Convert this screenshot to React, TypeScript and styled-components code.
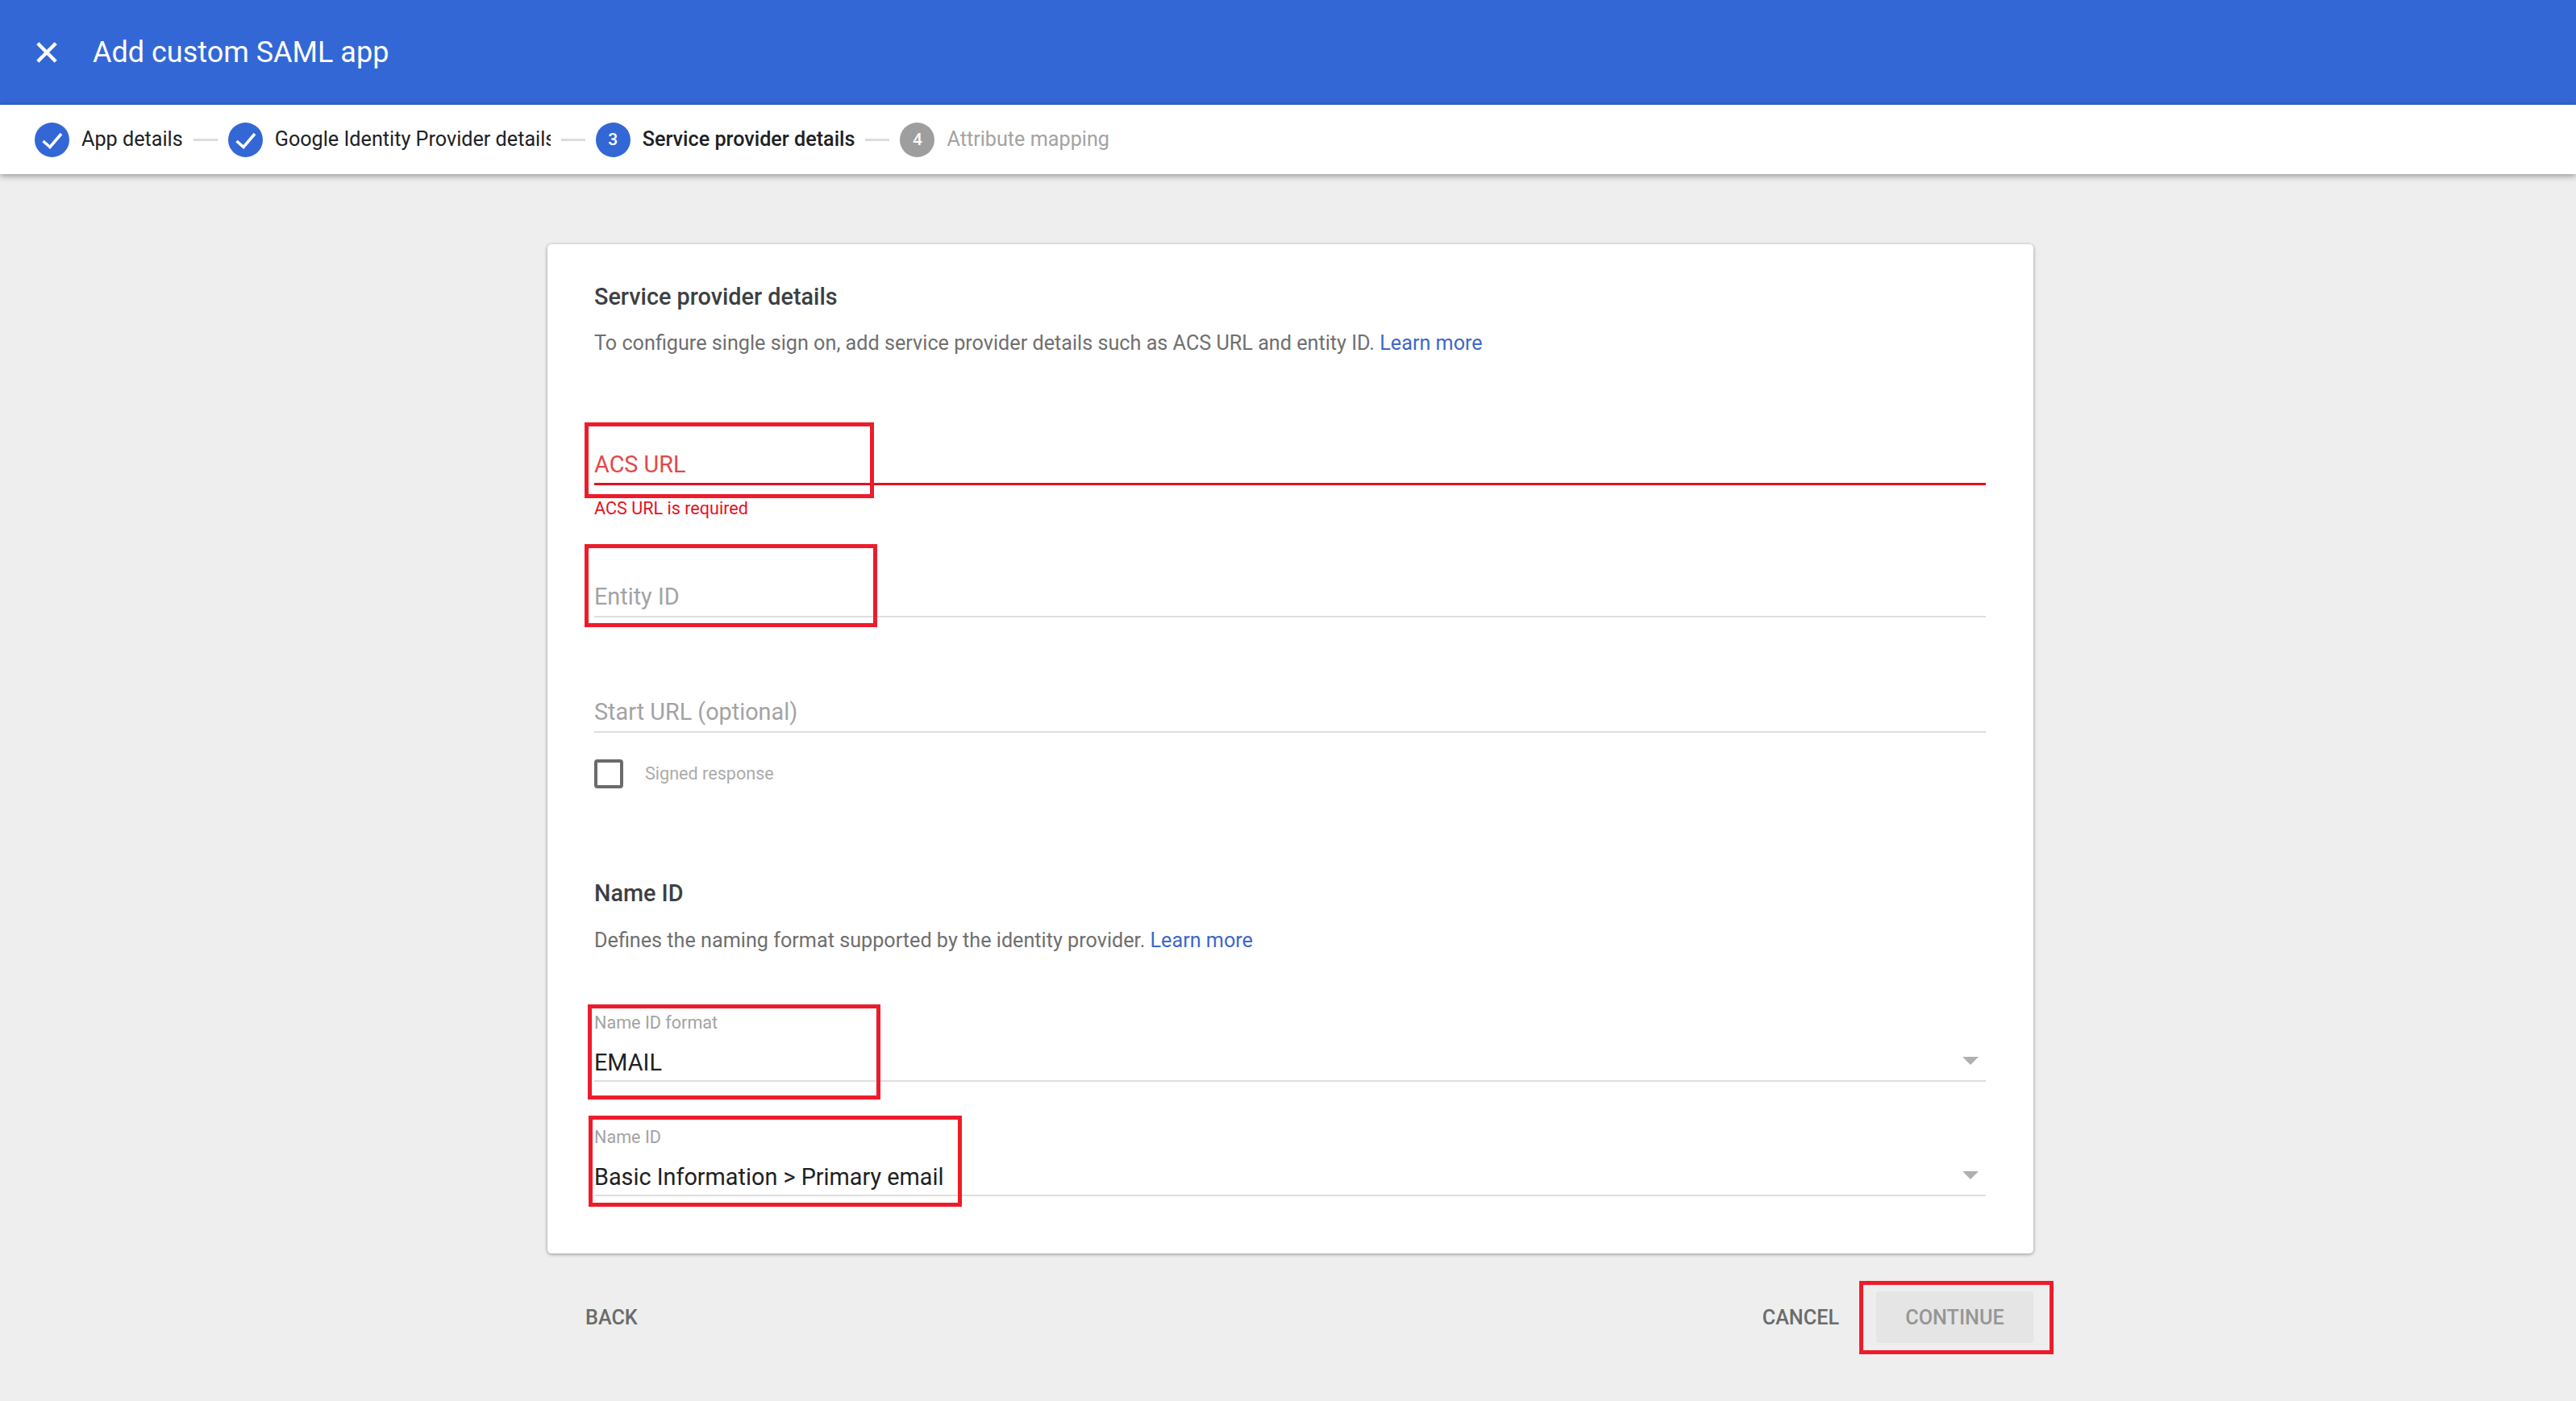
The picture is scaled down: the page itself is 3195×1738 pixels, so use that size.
import styled, { createGlobalStyle } from "styled-components";

const GlobalStyle = createGlobalStyle`
  html, body {
    margin: 0;
    padding: 0;
    background: #eeeeee;
    font-family: Roboto, "Liberation Sans", sans-serif;
  }
`;

const Page = styled.div`
  min-height: 1738px;
  background: #eeeeee;
  overflow: hidden;
`;

const Header = styled.header`
  height: 130px;
  background: #3367d6;
  display: flex;
  align-items: center;
  padding-left: 45px;
  color: #fff;
`;

const CloseIcon = styled.svg`
  width: 26px;
  height: 26px;
  margin-right: 44px;
  flex: none;
`;

const HeaderTitle = styled.h1`
  margin: 0;
  font-size: 36px;
  line-height: 48px;
  font-weight: 400;
`;

const Stepper = styled.nav`
  position: relative;
  height: 86px;
  background: #fff;
  display: flex;
  align-items: center;
  padding-left: 43px;
  box-shadow: 0 2px 8px rgba(0, 0, 0, 0.4);
`;

const Step = styled.div`
  display: flex;
  align-items: center;
`;

const StepCircle = styled.span<{ $disabled?: boolean }>`
  width: 43px;
  height: 43px;
  border-radius: 50%;
  flex: none;
  margin-right: 15px;
  display: flex;
  align-items: center;
  justify-content: center;
  background: ${(p) => (p.$disabled ? "#9e9e9e" : "#3367d6")};
  color: #fff;
  font-size: 21px;
  font-weight: 500;
`;

const StepLabel = styled.span<{ $active?: boolean; $disabled?: boolean; $maxWidth?: number }>`
  font-size: 25.2px;
  line-height: 36px;
  white-space: nowrap;
  overflow: hidden;
  font-weight: ${(p) => (p.$active ? 500 : 400)};
  color: ${(p) => (p.$disabled ? "#a3a3a3" : "#202124")};
  max-width: ${(p) => (p.$maxWidth ? `${p.$maxWidth}px` : "none")};
`;

const Connector = styled.span`
  width: 30px;
  height: 3px;
  background: #dcdcdc;
  margin: 0 13px;
  flex: none;
`;

const Main = styled.main`
  width: 1843px;
  margin: 87px 0 0 679px;
`;

const Card = styled.section`
  height: 1252px;
  box-sizing: border-box;
  padding: 45px 59px 0 58px;
  background: #fff;
  border-radius: 5px;
  box-shadow: 0 1px 4px rgba(0, 0, 0, 0.4);
`;

const SectionTitle = styled.h2<{ $gap?: number }>`
  margin: ${(p) => p.$gap ?? 0}px 0 0;
  font-size: 28.8px;
  line-height: 40px;
  font-weight: 500;
  color: #3c4043;
`;

const Description = styled.p<{ $gap: number }>`
  margin: ${(p) => p.$gap}px 0 0;
  font-size: 25.2px;
  line-height: 36px;
  color: #6f6f6f;
`;

const Link = styled.a`
  color: #3f67c9;
  text-decoration: none;
`;

const TextField = styled.div<{ $gap: number; $error?: boolean }>`
  position: relative;
  margin-top: ${(p) => p.$gap}px;
  padding-bottom: ${(p) => (p.$error ? 5 : 6)}px;
  font-size: 28.8px;
  line-height: 36px;
  color: ${(p) => (p.$error ? "#e0494a" : "#a3a3a3")};
  border-bottom: ${(p) => (p.$error ? "3px solid #e4111f" : "2px solid #dedede")};
`;

const ErrorText = styled.div`
  margin-top: 15px;
  font-size: 21.6px;
  line-height: 28px;
  color: #e4111f;
`;

const CheckRow = styled.label`
  display: flex;
  align-items: center;
  margin-top: 33px;
  height: 36px;
  font-size: 21.6px;
  line-height: 34px;
  color: #ababab;
`;

const CheckBox = styled.span`
  width: 36px;
  height: 36px;
  box-sizing: border-box;
  border: 4px solid #6b6b6b;
  border-radius: 4px;
  margin-right: 27px;
  flex: none;
`;

const SelectField = styled.div<{ $gap: number }>`
  position: relative;
  margin-top: ${(p) => p.$gap}px;
  padding-bottom: 4px;
  border-bottom: 2px solid #dedede;
`;

const SelectLabel = styled.div`
  font-size: 21.6px;
  line-height: 28px;
  color: #a3a3a3;
`;

const SelectValue = styled.div`
  margin-top: 18px;
  font-size: 28.8px;
  line-height: 35px;
  color: #202124;
`;

const Caret = styled.span`
  position: absolute;
  right: 9px;
  top: 56px;
  width: 0;
  height: 0;
  border-left: 10px solid transparent;
  border-right: 10px solid transparent;
  border-top: 10px solid #b0b0b0;
`;

const Footer = styled.footer`
  margin-top: 47px;
  height: 64px;
  display: flex;
  align-items: center;
  justify-content: space-between;
`;

const Actions = styled.div`
  display: flex;
  align-items: center;
  gap: 46px;
`;

const TextButton = styled.button<{ $inset?: number }>`
  padding: 2px 0 0;
  margin-left: ${(p) => p.$inset ?? 0}px;
  border: 0;
  background: none;
  font: 500 25.2px/36px Roboto, "Liberation Sans", sans-serif;
  color: #6b6b6b;
`;

const ContinueWrap = styled.div`
  position: relative;
`;

const ContinueButton = styled.button`
  display: block;
  width: 195px;
  height: 64px;
  padding: 2px 0 0;
  border: 0;
  border-radius: 4px;
  background: #e5e5e5;
  font: 500 25.2px/36px Roboto, "Liberation Sans", sans-serif;
  color: #969696;
`;

// red rectangles someone drew on the screenshot, they sit over the fields
const Callout = styled.span<{ $left: number; $top: number; $width: number; $height: number }>`
  position: absolute;
  left: ${(p) => p.$left}px;
  top: ${(p) => p.$top}px;
  width: ${(p) => p.$width}px;
  height: ${(p) => p.$height}px;
  box-sizing: border-box;
  border: 5px solid #ee1b2b;
  pointer-events: none;
`;

const Check = () => (
  <svg width="43" height="43" viewBox="0 0 43 43" fill="none">
    <path d="M10.5 23l8.5 7.5L33 14" stroke="#fff" strokeWidth="3.6" />
  </svg>
);

export default function App() {
  return (
    <Page>
      <GlobalStyle />
      <Header>
        <CloseIcon viewBox="0 0 26 26" fill="none">
          <path d="M1.8 1.8l22.4 22.4M24.2 1.8L1.8 24.2" stroke="#fff" strokeWidth="4.4" />
        </CloseIcon>
        <HeaderTitle>Add custom SAML app</HeaderTitle>
      </Header>

      <Stepper>
        <Step>
          <StepCircle>
            <Check />
          </StepCircle>
          <StepLabel>App details</StepLabel>
        </Step>
        <Connector />
        <Step>
          <StepCircle>
            <Check />
          </StepCircle>
          <StepLabel $maxWidth={342}>Google Identity Provider details</StepLabel>
        </Step>
        <Connector />
        <Step>
          <StepCircle>3</StepCircle>
          <StepLabel $active>Service provider details</StepLabel>
        </Step>
        <Connector />
        <Step>
          <StepCircle $disabled>4</StepCircle>
          <StepLabel $disabled>Attribute mapping</StepLabel>
        </Step>
      </Stepper>

      <Main>
        <Card>
          <SectionTitle>Service provider details</SectionTitle>
          <Description $gap={20}>
            To configure single sign on, add service provider details such as ACS URL and entity ID.{" "}
            <Link>Learn more</Link>
          </Description>

          <TextField $gap={114} $error>
            ACS URL
            <Callout $left={-12} $top={-34} $width={359} $height={94} />
          </TextField>
          <ErrorText>ACS URL is required</ErrorText>

          <TextField $gap={77}>
            Entity ID
            <Callout $left={-12} $top={-47} $width={363} $height={103} />
          </TextField>
          <TextField $gap={99}>Start URL (optional)</TextField>

          <CheckRow>
            <CheckBox />
            Signed response
          </CheckRow>

          <SectionTitle $gap={110}>Name ID</SectionTitle>
          <Description $gap={21}>
            Defines the naming format supported by the identity provider. <Link>Learn more</Link>
          </Description>

          <SelectField $gap={70}>
            <SelectLabel>Name ID format</SelectLabel>
            <SelectValue>EMAIL</SelectValue>
            <Caret />
            <Callout $left={-8} $top={-9} $width={363} $height={118} />
          </SelectField>
          <SelectField $gap={55}>
            <SelectLabel>Name ID</SelectLabel>
            <SelectValue>Basic Information &gt; Primary email</SelectValue>
            <Caret />
            <Callout $left={-7} $top={-13} $width={463} $height={113} />
          </SelectField>
        </Card>

        <Footer>
          <TextButton $inset={47}>BACK</TextButton>
          <Actions>
            <TextButton>CANCEL</TextButton>
            <ContinueWrap>
              <ContinueButton>CONTINUE</ContinueButton>
              <Callout $left={-21} $top={-13} $width={241} $height={91} />
            </ContinueWrap>
          </Actions>
        </Footer>
      </Main>
    </Page>
  );
}
